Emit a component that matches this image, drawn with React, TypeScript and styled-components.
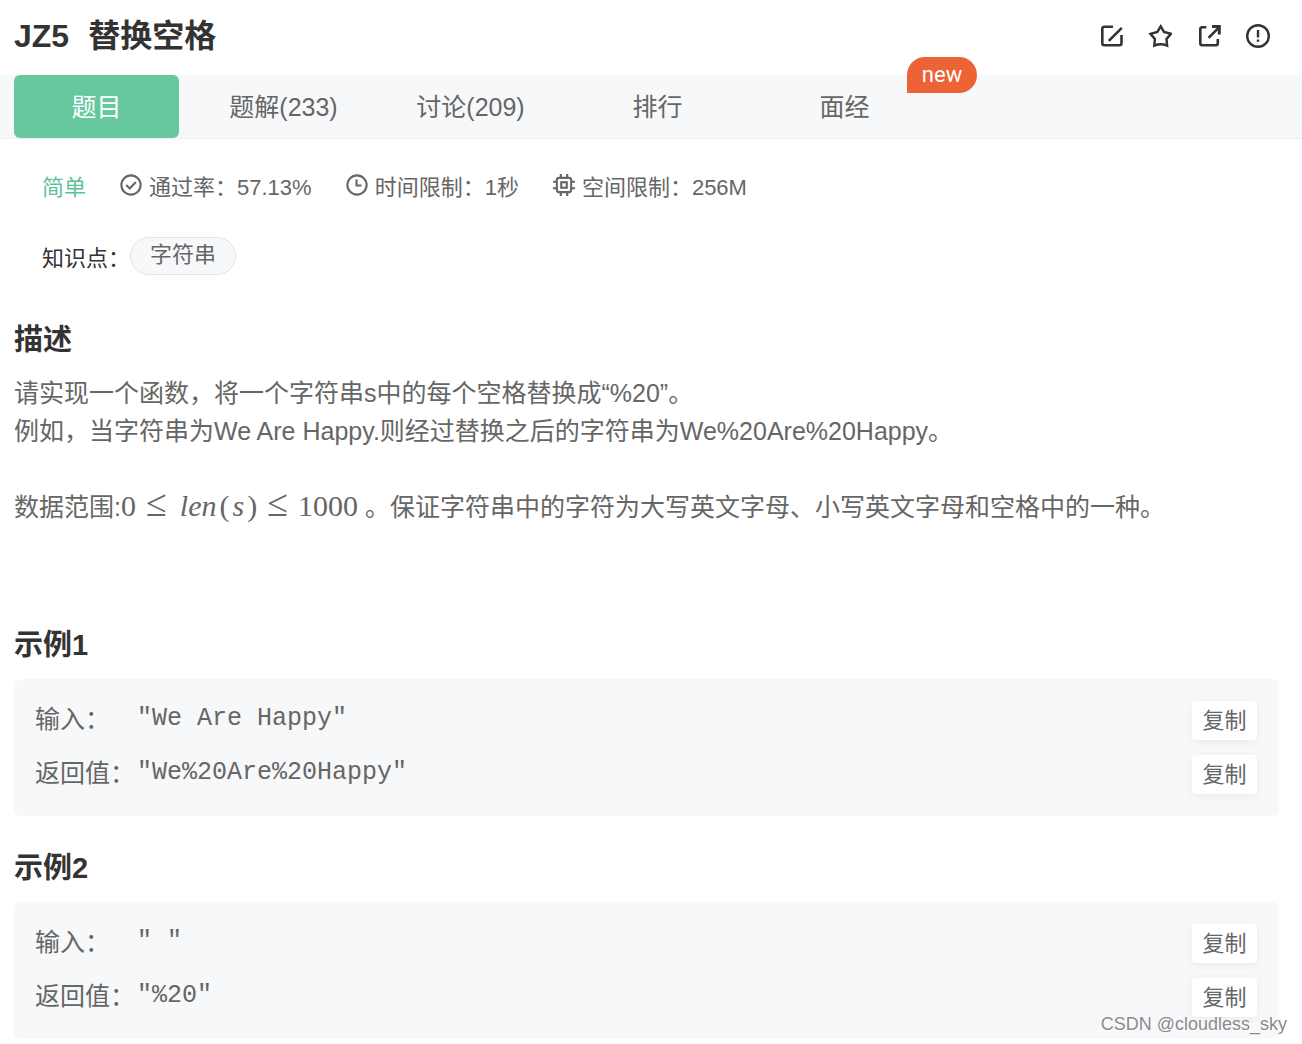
import React from "react";
import styled, { createGlobalStyle } from "styled-components";

const Global = createGlobalStyle`
  * { box-sizing: border-box; }
  body {
    margin: 0;
    background: #fff;
    color: #666;
    font-family: "Liberation Sans", "Noto Sans CJK SC", sans-serif;
    font-size: 25px;
    line-height: 38px;
  }
  button { font: inherit; border: 0; cursor: pointer; }
`;

const Page = styled.div`
  position: relative;
  padding-bottom: 4px;
`;

const Header = styled.header`
  display: flex;
  align-items: center;
  justify-content: space-between;
  height: 75px;
  padding: 0 32px 4px 14px;
`;

const Title = styled.h1`
  display: flex;
  gap: 19px;
  margin: 0;
  color: #333;
  font-size: 32px;
  line-height: 48px;
`;

const Actions = styled.div`
  display: flex;
  gap: 25px;
`;

const IconButton = styled.button`
  display: flex;
  padding: 0;
  background: none;
  color: #333;
`;

const Tabs = styled.nav`
  display: flex;
  gap: 22px;
  padding: 0 14px;
  background: #f7f8fa;
  border-bottom: 1px solid #eff1f4;
`;

const Tab = styled.button<{ $active?: boolean }>`
  position: relative;
  width: 165px;
  height: 63px;
  padding: 0;
  border-radius: 6px;
  background: ${(p) => (p.$active ? "#67c79d" : "transparent")};
  color: ${(p) => (p.$active ? "#fff" : "#666")};
`;

const NewBadge = styled.span`
  position: absolute;
  top: -18px;
  left: 145px;
  width: 70px;
  border-radius: 18px 18px 18px 0;
  background: #ed6335;
  color: #fff;
  font-family: Roboto, "Liberation Sans", sans-serif;
  font-size: 22px;
  line-height: 36px;
`;

const Meta = styled.div`
  display: flex;
  gap: 34px;
  padding: 32px 42px 0;
  font-size: 22px;
  line-height: 34px;
`;

const Level = styled.span`
  color: #5fbf9c;
`;

const MetaItem = styled.span`
  display: flex;
  gap: 7px;

  svg {
    margin-top: 3px;
  }
`;

const Knowledge = styled.div`
  display: flex;
  align-items: flex-end;
  padding: 32px 42px 0;
  color: #333;
  font-size: 22px;
  line-height: 32px;
`;

const Tag = styled.a`
  height: 38px;
  padding: 0 19px;
  border: 1px solid #e2e4e8;
  border-radius: 19px;
  background: #f7f8fa;
  color: #666;
  line-height: 34px;
  text-decoration: none;
`;

const Section = styled.section`
  padding: 0 23px 0 14px;
`;

const Heading = styled.h2`
  margin: 0;
  color: #333;
  font-size: 29px;
  line-height: 44px;
`;

const Problem = styled(Section)`
  margin-top: 43px;
  padding-bottom: 67px;
`;

const Description = styled.div`
  padding-top: 12px;
`;

const Paragraph = styled.p`
  margin: 0;

  & + & {
    margin-top: 38px;
  }
`;

const Formula = styled.span`
  font-family: "Liberation Serif", serif;
  font-size: 30px;
  line-height: 30px;

  i {
    margin: 0 3px;
  }
`;

const Relation = styled.span`
  margin: 0 10px;
  font-size: 38px;
`;

const Sample = styled(Section)`
  margin-top: 30px;
`;

const Example = styled.div`
  display: grid;
  gap: 15px;
  margin-top: 12px;
  padding: 22px 22px 22px 21px;
  border-radius: 7px;
  background: #f7f8fa;
`;

const Line = styled.div`
  display: grid;
  grid-template-columns: 102px 1fr auto;
  align-items: start;
  line-height: 36px;
`;

const Code = styled.code`
  font-family: "Liberation Mono", monospace;
  font-size: 25px;
  white-space: pre;
`;

const Copy = styled.button`
  width: 65px;
  height: 39px;
  padding: 0;
  border-radius: 4px;
  background: #fff;
  color: #666;
  font-size: 22px;
  box-shadow: 0 2px 8px rgba(0, 0, 0, 0.06);
`;

const Watermark = styled.div`
  position: absolute;
  right: 15px;
  bottom: 7px;
  color: #8b8b8b;
  font-size: 18px;
  line-height: 24px;
  text-shadow: 1px 1px 0 #fff;
`;

const Icon = ({ size, weight = 2.3, children }: { size: number; weight?: number; children: React.ReactNode }) => (
  <svg
    width={size}
    height={size}
    viewBox="0 0 24 24"
    fill="none"
    stroke="currentColor"
    strokeWidth={weight}
    aria-hidden="true"
  >
    {children}
  </svg>
);

const examples = [
  { name: "示例1", input: '"We Are Happy"', output: '"We%20Are%20Happy"' },
  { name: "示例2", input: '" "', output: '"%20"' },
];

export default function App() {
  return (
    <Page>
      <Global />
      <Header>
        <Title>
          <span>JZ5</span>
          <span>替换空格</span>
        </Title>
        <Actions>
          <IconButton aria-label="编辑">
            <Icon size={24} weight={2.6}>
              <path d="M14 2.700H5.300a2 2 0 0 0-2 2v14.600a2 2 0 0 0 2 2h15.200a2 2 0 0 0 2-2V11M9.800 16.800 22.800 3.800" />
            </Icon>
          </IconButton>
          <IconButton aria-label="收藏">
            <Icon size={24} weight={2.4}>
              <path d="M12.700 2.300 16 7.900 23 9.800 18.500 14.900 19.100 21.600Q12.700 18.900 6.300 21.600L6.900 14.900 2.400 9.800 9.400 7.900Z" />
            </Icon>
          </IconButton>
          <IconButton aria-label="分享">
            <Icon size={24} weight={2.6}>
              <path d="M9.300 3.300H5.300a2 2 0 0 0-2 2v14a2 2 0 0 0 2 2h13.500a2 2 0 0 0 2-2V15M11.500 13.800 21.500 3.800" />
              <path d="M15 2.500h7.300v8" strokeWidth="3" />
            </Icon>
          </IconButton>
          <IconButton aria-label="反馈">
            <Icon size={24} weight={2.4}>
              <circle cx="12" cy="12" r="10.800" />
              <path d="M12 6v7.500M12 15.500v2.300" />
            </Icon>
          </IconButton>
        </Actions>
      </Header>

      <Tabs>
        <Tab $active>题目</Tab>
        <Tab>题解(233)</Tab>
        <Tab>讨论(209)</Tab>
        <Tab>排行</Tab>
        <Tab>
          面经<NewBadge>new</NewBadge>
        </Tab>
      </Tabs>

      <Meta>
        <Level>简单</Level>
        <MetaItem>
          <Icon size={22}>
            <circle cx="12" cy="12" r="10.500" />
            <path d="m6.800 12 3.800 3.700 6.700-7" />
          </Icon>
          通过率：57.13%
        </MetaItem>
        <MetaItem>
          <Icon size={22}>
            <circle cx="12" cy="12" r="10.500" />
            <path d="M11.500 6v6.500H17" />
          </Icon>
          时间限制：1秒
        </MetaItem>
        <MetaItem>
          <Icon size={22}>
            <rect x="4.200" y="4.200" width="15.600" height="15.600" rx="2.500" />
            <rect x="9" y="9" width="6" height="6" />
            <path d="M8.500 0v4M15.500 0v4M8.500 20v4M15.500 20v4M0 8.500h4M0 15.500h4M20 8.500h4M20 15.500h4" />
          </Icon>
          空间限制：256M
        </MetaItem>
      </Meta>

      <Knowledge>
        知识点：<Tag href="#string">字符串</Tag>
      </Knowledge>

      <Problem>
        <Heading>描述</Heading>
        <Description>
          <Paragraph>
            请实现一个函数，将一个字符串s中的每个空格替换成“%20”。
            <br />
            例如，当字符串为We Are Happy.则经过替换之后的字符串为We%20Are%20Happy。
          </Paragraph>
          <Paragraph>
            数据范围:
            <Formula>
              0<Relation>≤</Relation>
              <i>len</i>(<i>s</i>)<Relation>≤</Relation>1000
            </Formula>{" "}
            。保证字符串中的字符为大写英文字母、小写英文字母和空格中的一种。
          </Paragraph>
        </Description>
      </Problem>

      {examples.map((e) => (
        <Sample key={e.name}>
          <Heading>{e.name}</Heading>
          <Example>
            <Line>
              <span>输入：</span>
              <Code>{e.input}</Code>
              <Copy>复制</Copy>
            </Line>
            <Line>
              <span>返回值：</span>
              <Code>{e.output}</Code>
              <Copy>复制</Copy>
            </Line>
          </Example>
        </Sample>
      ))}
      <Watermark>CSDN @cloudless_sky</Watermark>
    </Page>
  );
}
